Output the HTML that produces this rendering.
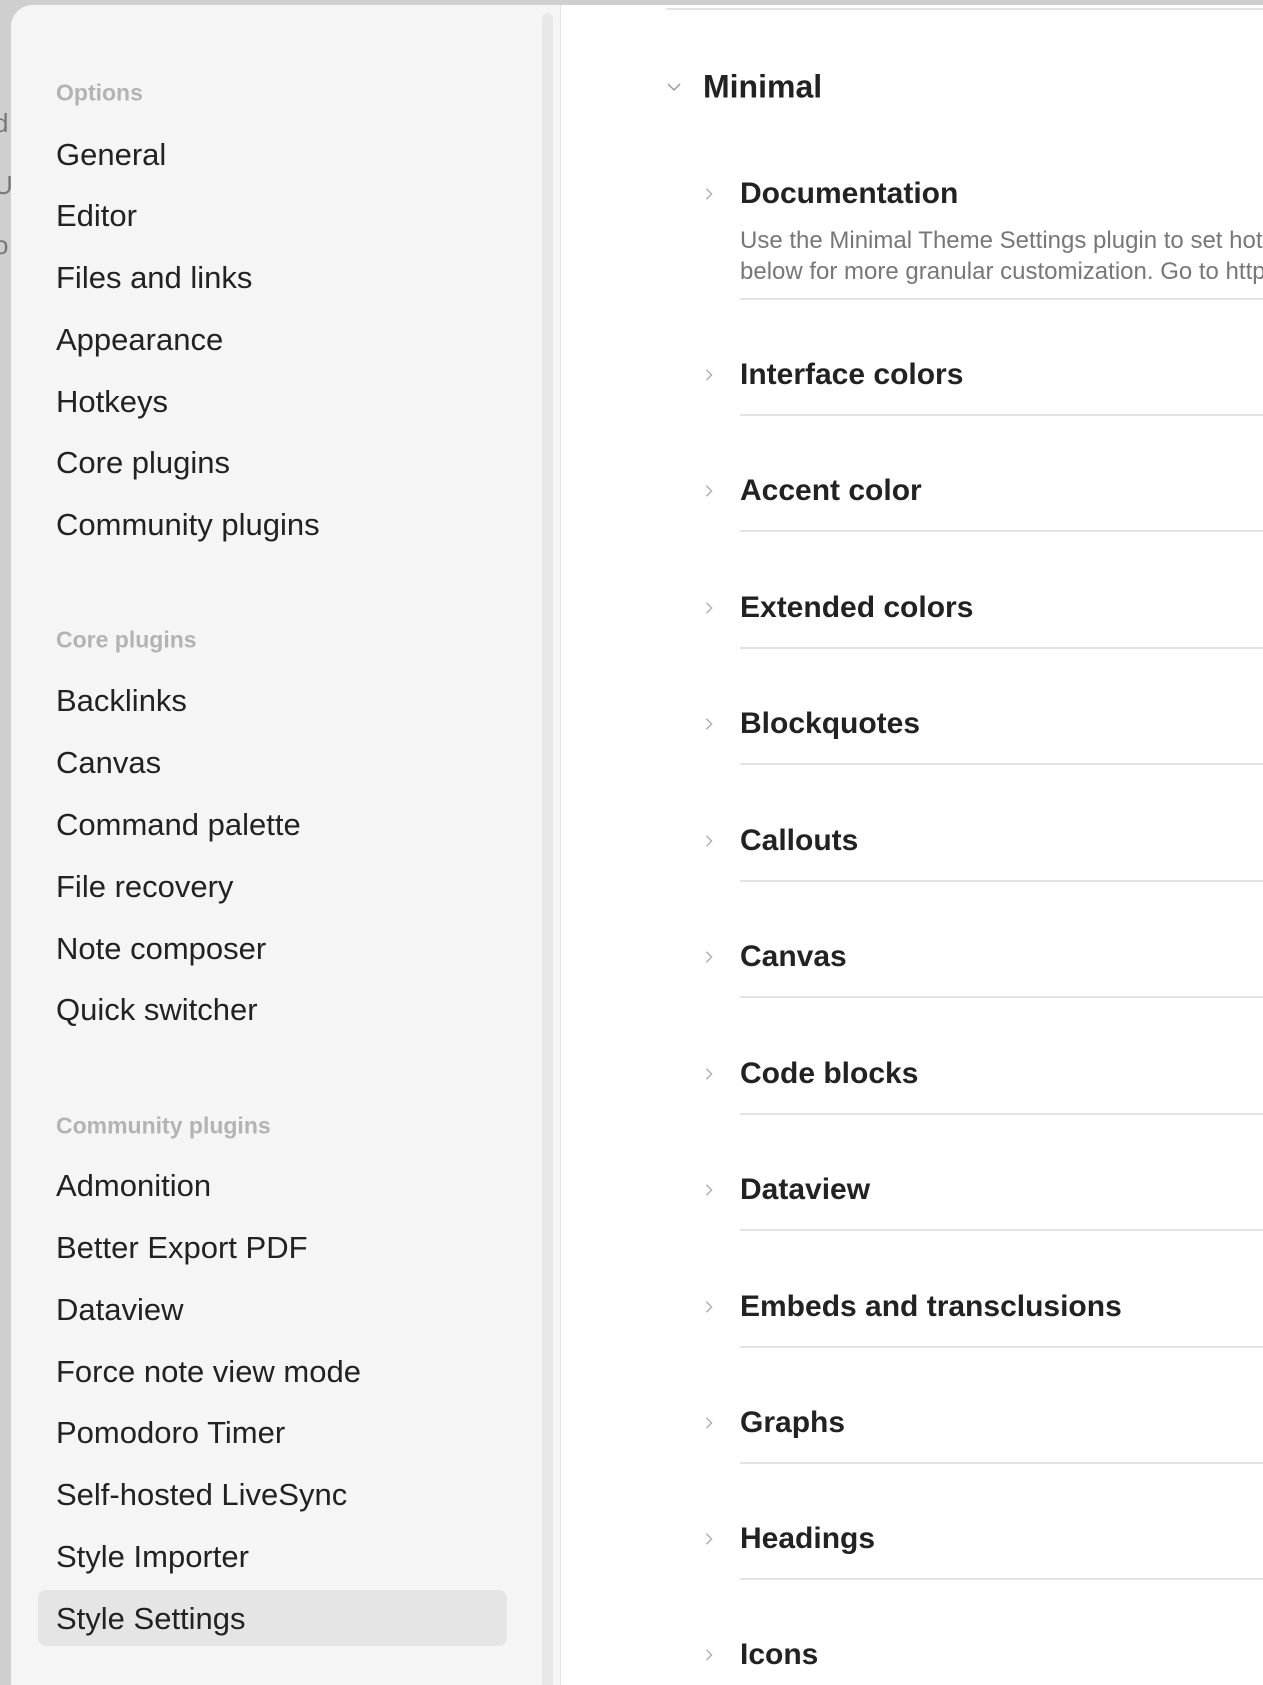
<!DOCTYPE html>
<html><head><meta charset="utf-8"><style>
*{margin:0;padding:0;box-sizing:border-box}
html,body{width:1263px;height:1665px;overflow:hidden;background:#cfcfcf;font-family:"Liberation Sans",sans-serif}
.bgtxt{position:absolute;left:-6px;color:#777;font-size:26px}
.panel{position:absolute;left:11px;top:5px;width:1260px;height:1680px;background:#fff;border-top-left-radius:22px;overflow:hidden}
.side{position:absolute;left:0;top:0;width:549px;height:100%;background:#f5f5f5}
.thumb{position:absolute;left:531px;top:8px;width:11px;height:1700px;background:#e8e8e8;border-radius:6px}
.sep{position:absolute;left:549px;top:0;width:1px;height:100%;background:#e4e4e4}
.lbl{position:absolute;left:45px;font-size:23px;font-weight:bold;color:#b3b3b3;transform:translateY(-50%);white-space:nowrap}
.nav{position:absolute;left:45px;font-size:31px;color:#222;transform:translateY(-50%);white-space:nowrap}
.hl{position:absolute;left:27px;width:469px;height:56px;background:#e5e5e5;border-radius:8px}
.h{position:absolute;left:729px;font-size:30px;font-weight:600;color:#222;transform:translateY(-50%);white-space:nowrap}
.chev{position:absolute;left:697px;width:14px;height:14px;transform:translateY(-50%)}
.line{position:absolute;left:729px;right:0;height:2px;background:#e3e3e3}
.desc{position:absolute;left:729px;font-size:24px;color:#777;white-space:nowrap;line-height:31px}
</style></head><body>
<div class="bgtxt" style="top:108px">d</div>
<div class="bgtxt" style="top:170px">U</div>
<div class="bgtxt" style="top:230px">o</div>
<div class="panel">
<div class="side">
<div class="thumb"></div>
<div class="lbl" style="top:88px">Options</div>
<div class="nav" style="top:150px">General</div>
<div class="nav" style="top:211px">Editor</div>
<div class="nav" style="top:273px">Files and links</div>
<div class="nav" style="top:335px">Appearance</div>
<div class="nav" style="top:397px">Hotkeys</div>
<div class="nav" style="top:458px">Core plugins</div>
<div class="nav" style="top:520px">Community plugins</div>
<div class="lbl" style="top:635px">Core plugins</div>
<div class="nav" style="top:696px">Backlinks</div>
<div class="nav" style="top:758px">Canvas</div>
<div class="nav" style="top:820px">Command palette</div>
<div class="nav" style="top:882px">File recovery</div>
<div class="nav" style="top:944px">Note composer</div>
<div class="nav" style="top:1005px">Quick switcher</div>
<div class="lbl" style="top:1121px">Community plugins</div>
<div class="nav" style="top:1181px">Admonition</div>
<div class="nav" style="top:1243px">Better Export PDF</div>
<div class="nav" style="top:1305px">Dataview</div>
<div class="nav" style="top:1367px">Force note view mode</div>
<div class="nav" style="top:1428px">Pomodoro Timer</div>
<div class="nav" style="top:1490px">Self-hosted LiveSync</div>
<div class="nav" style="top:1552px">Style Importer</div>
<div class="hl" style="top:1585px"></div>
<div class="nav" style="top:1614px">Style Settings</div>
</div>
<div class="sep"></div>
</div>
<div style="position:absolute;left:666px;right:0;top:8px;height:2px;background:#e3e3e3"></div>
<svg style="position:absolute;left:666px;top:80px" width="16" height="14" viewBox="0 0 16 14"><path d="M2 4l6 6 6-6" fill="none" stroke="#999" stroke-width="1.5"/></svg>
<div style="position:absolute;left:703px;top:87px;transform:translateY(-50%);font-size:32px;font-weight:600;color:#222">Minimal</div>
<div id="items"></div>
<script>
var items=[["Documentation",194],["Interface colors",375],["Accent color",491],["Extended colors",608],["Blockquotes",724],["Callouts",841],["Canvas",957],["Code blocks",1074],["Dataview",1190],["Embeds and transclusions",1307],["Graphs",1423],["Headings",1539],["Icons",1655]];
var h="";
items.forEach(function(it,i){var y=it[1];
h+='<svg class="chev" style="left:702px;top:'+y+'px;position:absolute;transform:translateY(-50%)" width="12" height="16" viewBox="0 0 12 16"><path d="M3 2l6 6-6 6" fill="none" stroke="#aaa" stroke-width="1.5"/></svg>';
h+='<div class="h" style="left:740px;top:'+y+'px">'+it[0]+'</div>';
var ly=(i==0)?298:y+39;
if(i<12)h+='<div class="line" style="left:740px;top:'+ly+'px"></div>';});
h+='<div class="desc" style="left:740px;top:225px">Use the Minimal Theme Settings plugin to set hotkeys<br>below for more granular customization. Go to https://</div>';
document.getElementById("items").innerHTML=h;
</script>
</body></html>
